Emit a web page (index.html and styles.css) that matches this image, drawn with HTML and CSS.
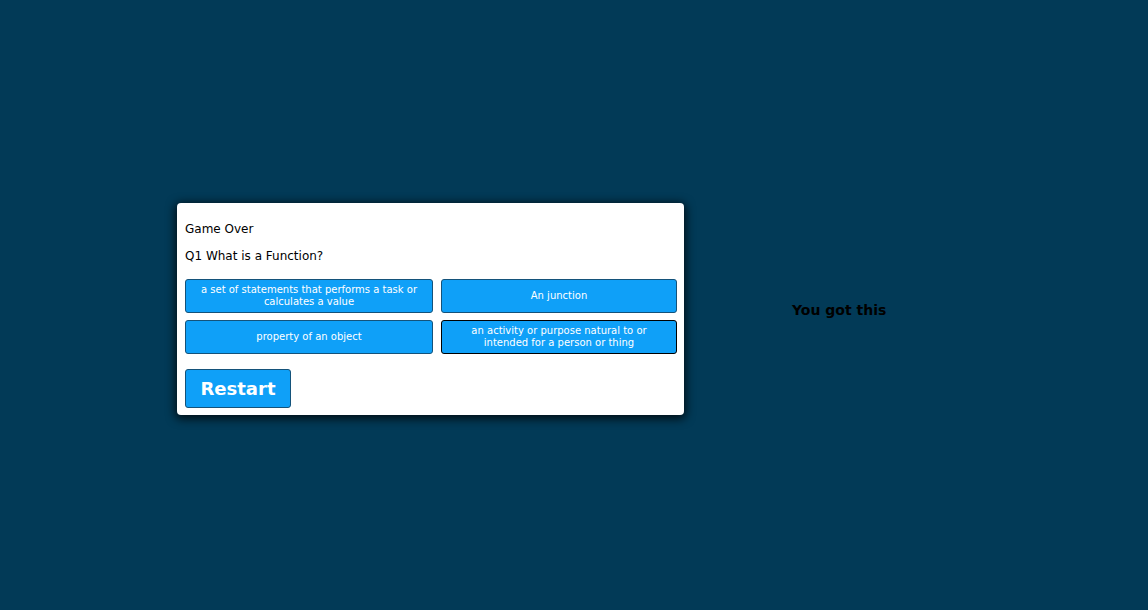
FILE: index.html
```html
<!DOCTYPE html>
<html>
<head>
<meta charset="utf-8">
<link rel="stylesheet" href="styles.css">
</head>
<body>
<main class="stage">
  <section class="card">
    <p class="status">Game Over</p>
    <p class="question">Q1 What is a Function?</p>
    <div class="answers">
      <button class="answer">a set of statements that performs a task or calculates a value</button>
      <button class="answer">An junction</button>
      <button class="answer">property of an object</button>
      <button class="answer focused">an activity or purpose natural to or intended for a person or thing</button>
    </div>
    <button class="restart">Restart</button>
  </section>
  <p class="cheer">You got this</p>
</main>
</body>
</html>
```
FILE: styles.css
```css
html, body {
  margin: 0;
  padding: 0;
  height: 100%;
}
body {
  background: #023a57;
  font-family: "DejaVu Sans", Verdana, sans-serif;
  color: #000;
}
.stage {
  height: 100%;
  display: flex;
  align-items: center;
  padding-left: 177px;
  padding-top: 8px;
  gap: 108px;
  box-sizing: border-box;
}
.card {
  width: 507px;
  box-sizing: border-box;
  background: #fff;
  border-radius: 4px;
  box-shadow: 0 2px 10px 2px rgba(0, 0, 0, 0.75);
  padding: 19px 7px 7px 8px;
}
.status, .question {
  margin: 0;
  font-size: 12px;
  line-height: 14px;
}
.question {
  margin-top: 13px;
}
.answers {
  display: grid;
  grid-template-columns: 248fr 236fr;
  gap: 7px 8px;
  margin-top: 16px;
}
.answer {
  font-family: "DejaVu Sans", Verdana, sans-serif;
  font-size: 10px;
  line-height: 12px;
  color: #fff;
  background: #0fa0f8;
  border: 1px solid #14527a;
  border-radius: 3px;
  padding: 4px 10px;
  min-height: 34px;
  display: flex;
  align-items: center;
  justify-content: center;
  text-align: center;
}
.answer.focused {
  border-color: #000;
}
.restart {
  margin-top: 15px;
  font-family: "DejaVu Sans", Verdana, sans-serif;
  font-weight: bold;
  font-size: 18px;
  line-height: 21px;
  color: #fff;
  background: #0fa0f8;
  border: 1px solid #14527a;
  border-radius: 3px;
  width: 106px;
  height: 39px;
  padding: 0;
}
.cheer {
  margin: 2px 0 0;
  font-weight: bold;
  font-size: 14px;
  color: #000;
}
```
